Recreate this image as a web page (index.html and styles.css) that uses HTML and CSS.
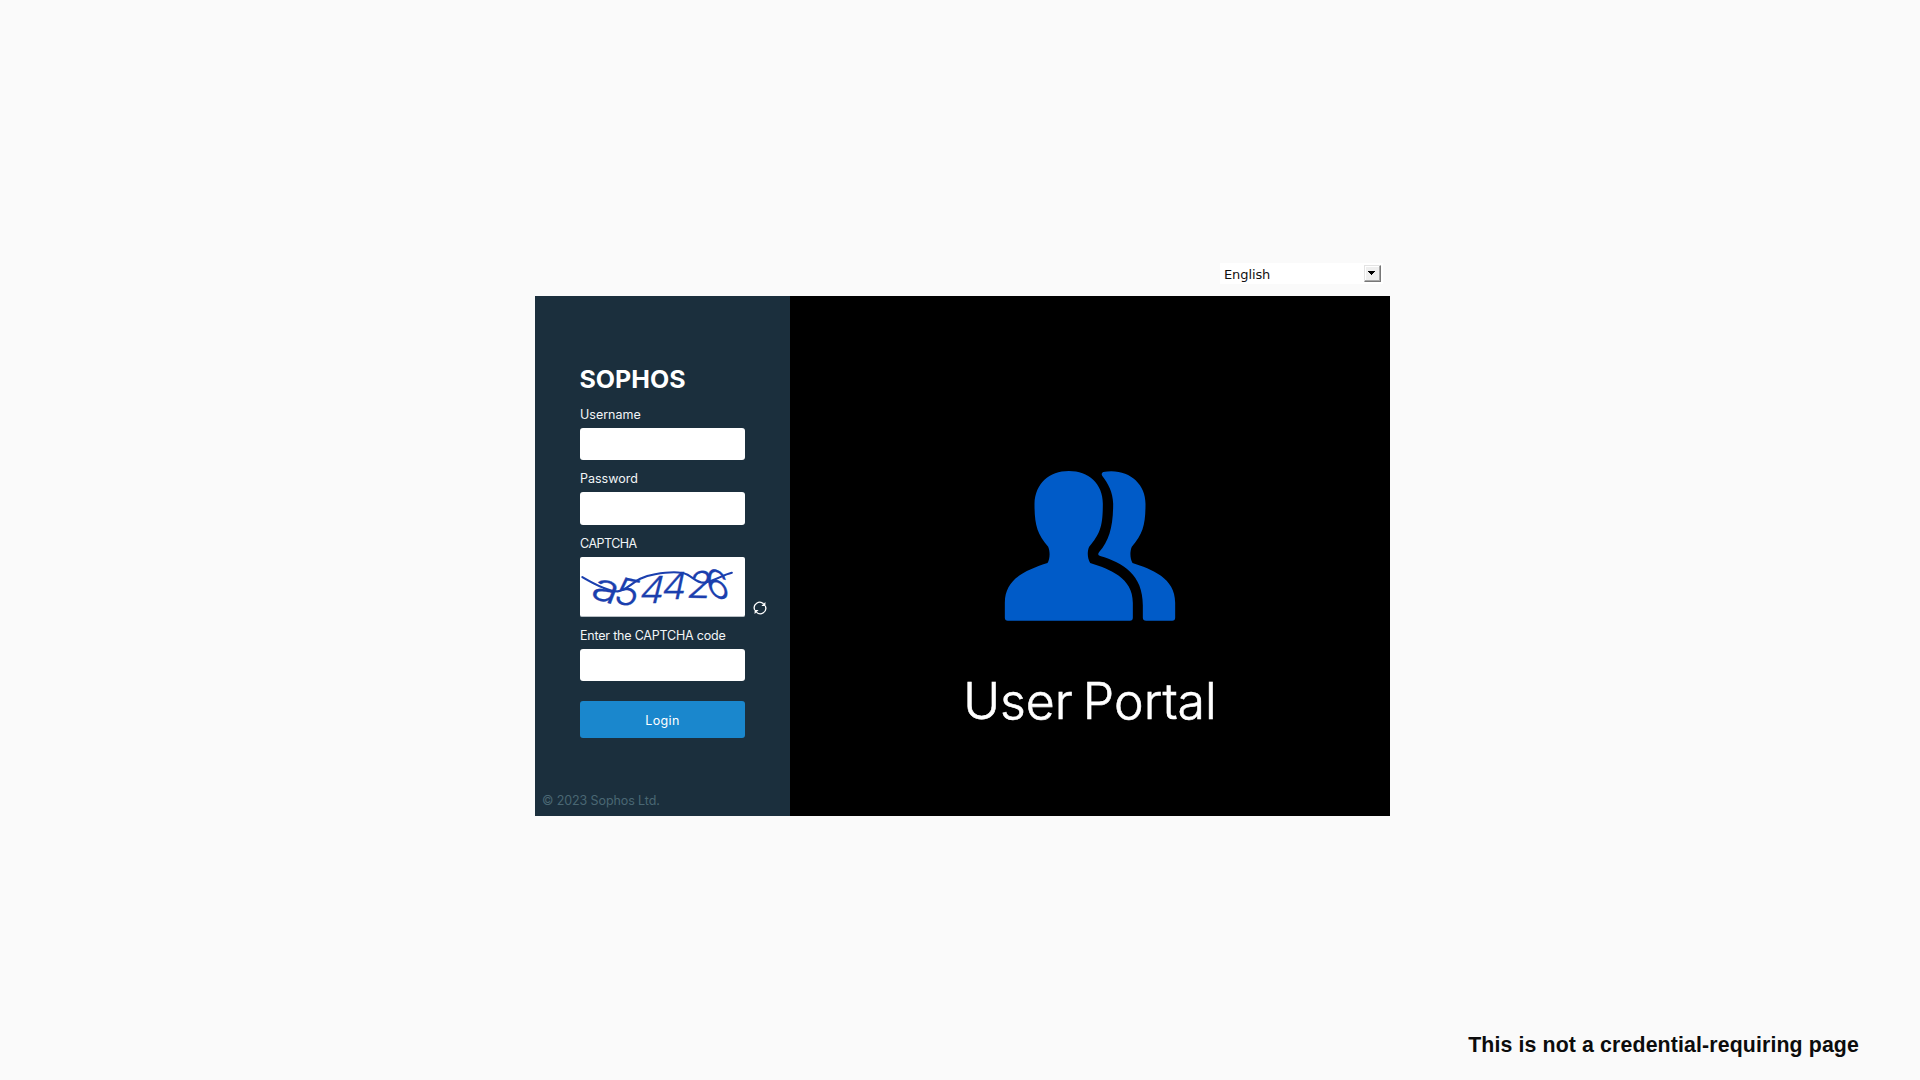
FILE: index.html
```
<!DOCTYPE html>
<html lang="en">
<head>
<meta charset="utf-8">
<title>User Portal</title>
<link rel="stylesheet" href="styles.css">
</head>
<body>
<main class="portal">
  <div class="language" role="combobox" aria-label="Language">
    <span class="language-name">English</span>
    <span class="language-arrow"><svg width="7" height="4" viewBox="0 0 7 4" shape-rendering="crispEdges"><path d="M0 0H7V1H6V2H5V3H4V4H3V3H2V2H1V1H0Z"/></svg></span>
  </div>
  <div class="panel">
    <form class="login">
      <svg class="logo" width="107" height="20" viewBox="0 0 107 20"><text x="-0.5" y="19" textLength="106" lengthAdjust="spacingAndGlyphs">SOPHOS</text></svg>
      <label class="label user-label" for="user">Username</label>
      <input class="field" id="user" type="text">
      <label class="label" for="pass">Password</label>
      <input class="field tall" id="pass" type="password">
      <span class="label captcha-label">CAPTCHA</span>
      <div class="captcha">
        <svg class="captcha-image" width="165" height="60" viewBox="0 0 165 60">
          <g class="captcha-text">
            <text transform="translate(8 41) rotate(17) skewX(-4) scale(1.35 1.1)">a</text>
            <text transform="translate(31 46) rotate(12) skewX(-6) scale(1.15 1.05)">5</text>
            <text transform="translate(57 47) rotate(0) skewX(-14) scale(1.1 1.05)">4</text>
            <text transform="translate(80 43) rotate(0) skewX(-12) scale(1.1 1.05)">4</text>
            <text transform="translate(106 41.500) rotate(1) skewX(-10) scale(1.1 1.05)">2</text>
            <text transform="translate(128 38) rotate(18) skewX(24) scale(1.15 1)">6</text>
          </g>
          <path class="captcha-line" d="M1 20.500C12 27 27 35 37 35C49 33 53 21 75 17.500C89 15 102 15 108 18C115 22 119 27 126 26C136 24 144 18 153 16"/>
        </svg>
        <svg class="refresh" width="14" height="14" viewBox="0 0 14 14"><path class="refresh-arc" d="M1.700 9A5.500 5.500 0 0 1 10.600 2.900M12.300 5A5.500 5.500 0 0 1 3.400 11.100"/><path class="refresh-head" d="M12.400 0.900V5H8.400ZM1.600 13.100V9H5.600Z"/></svg>
      </div>
      <label class="label code-label" for="code">Enter the CAPTCHA code</label>
      <input class="field" id="code" type="text">
      <button class="submit" type="button">Login</button>
      <small class="copyright">© 2023 Sophos Ltd.</small>
    </form>
    <section class="hero">
      <svg class="people" width="172" height="150" viewBox="74 62 513 450">
        <path d="M267 62C326 62 369 100 369 160C369 225 362 250 328 289C322 302 322 324 331 338C390 357 459 382 459 457V502Q459 511 450 511H84Q75 511 75 502V457C75 382 145 357 203 338C211 325 211 302 205 289C171 250 164 222 164 160C166 100 208 62 267 62Z"/>
        <path d="M370 65C443 52 497 98 497 160C497 222 490 250 456 289C450 302 450 324 458 338C515 357 586 382 586 457V502Q586 511 577 511H499Q489 511 489 502V465C489 373 430 337 361 317Q351 314 358 305C388 271 400 229 400 160C399 125 385 99 367 76Q363 69 370 65Z"/>
      </svg>
      <h1 class="title">User Portal</h1>
    </section>
  </div>
</main>
<p class="notice">This is not a credential-requiring page</p>
</body>
</html>
```
FILE: styles.css
```
* { box-sizing: border-box; }
body {
  margin: 0;
  width: 1920px;
  height: 1080px;
  overflow: hidden;
  background: #fafafa;
  font-family: Inter, "Liberation Sans", sans-serif;
  display: flex;
  flex-direction: column;
}
.portal { width: 855px; margin: 263px 0 0 535px; display: flex; flex-direction: column; }
.language {
  align-self: flex-end;
  width: 163px;
  height: 21px;
  margin: 0 7px 12px 0;
  padding: 0 2px 0 4px;
  display: flex;
  align-items: center;
  justify-content: space-between;
  background: #fff;
}
.language-name { font: 13px/21px "DejaVu Sans", sans-serif; letter-spacing: -0.1px; color: #111; padding-top: 1px; }
.language-arrow {
  width: 17px;
  height: 17px;
  display: flex;
  justify-content: flex-start;
  padding: 5px 0 0 3px;
  background: #efefef;
  border: 1px solid;
  border-color: #e3e3e3 #777 #777 #e3e3e3;
  box-shadow: inset -1px -1px #a8a8a8, inset 1px 1px #fff;
}
.panel { display: flex; height: 520px; }
.login {
  width: 255px;
  background: #1b2f3d;
  padding: 73px 0 0 45px;
  display: flex;
  flex-direction: column;
  align-items: flex-start;
}
.logo { display: block; overflow: visible; fill: #fff; font: 700 24px Inter, sans-serif; }
.label { color: #f2f5f7; font-size: 12.5px; line-height: 16px; height: 16px; margin: 11px 0 5px; }
.user-label { margin-top: 18px; }
.captcha-label { letter-spacing: -0.5px; }
.code-label { letter-spacing: -0.2px; }
.field { width: 165px; height: 32px; border: 0; border-radius: 3px; padding: 0 8px; background: #fff; }
.tall { height: 33px; }
.captcha { display: flex; align-items: flex-end; gap: 8px; height: 60px; }
.captcha-image { background: #fff; border-radius: 2px; border-bottom: 1px solid #b9c0c5; }
.captcha-text { font: 300 36px Inter, sans-serif; fill: #1b3fae; stroke: #1b3fae; stroke-width: 0.3; }
.captcha-line { fill: none; stroke: #1b3fae; stroke-width: 2.2; stroke-linecap: round; }
.refresh { margin-bottom: 2px; }
.refresh-arc { fill: none; stroke: #fff; stroke-width: 1.3; }
.refresh-head { fill: #fff; }
.submit {
  width: 165px;
  height: 37px;
  margin-top: 20px;
  border: 0;
  border-radius: 3px;
  background: #1a87cd;
  color: #fff;
  font: 12.5px Inter, sans-serif;
  letter-spacing: 0.4px;
  padding: 1px 0 0;
}
.copyright { margin: 55px 0 0 -38px; font-size: 12.5px; line-height: 16px; letter-spacing: -0.1px; color: #4a6773; }
.hero { width: 600px; background: #000; display: flex; flex-direction: column; align-items: center; padding-top: 174.5px; }
.people { display: block; fill: #005bc8; }
.title {
  margin: 50.5px 0 0;
  color: #fff;
  font-weight: 300;
  font-size: 50px;
  line-height: 60px;
  letter-spacing: 0;
  word-spacing: -4px;
  -webkit-text-stroke: 0.6px #fff;
}
.notice { align-self: flex-end; margin: 217px 61px 0 0; font: 700 21.3px/24px "Liberation Sans", sans-serif; letter-spacing: 0.13px; color: #0c0c0c; }
```
